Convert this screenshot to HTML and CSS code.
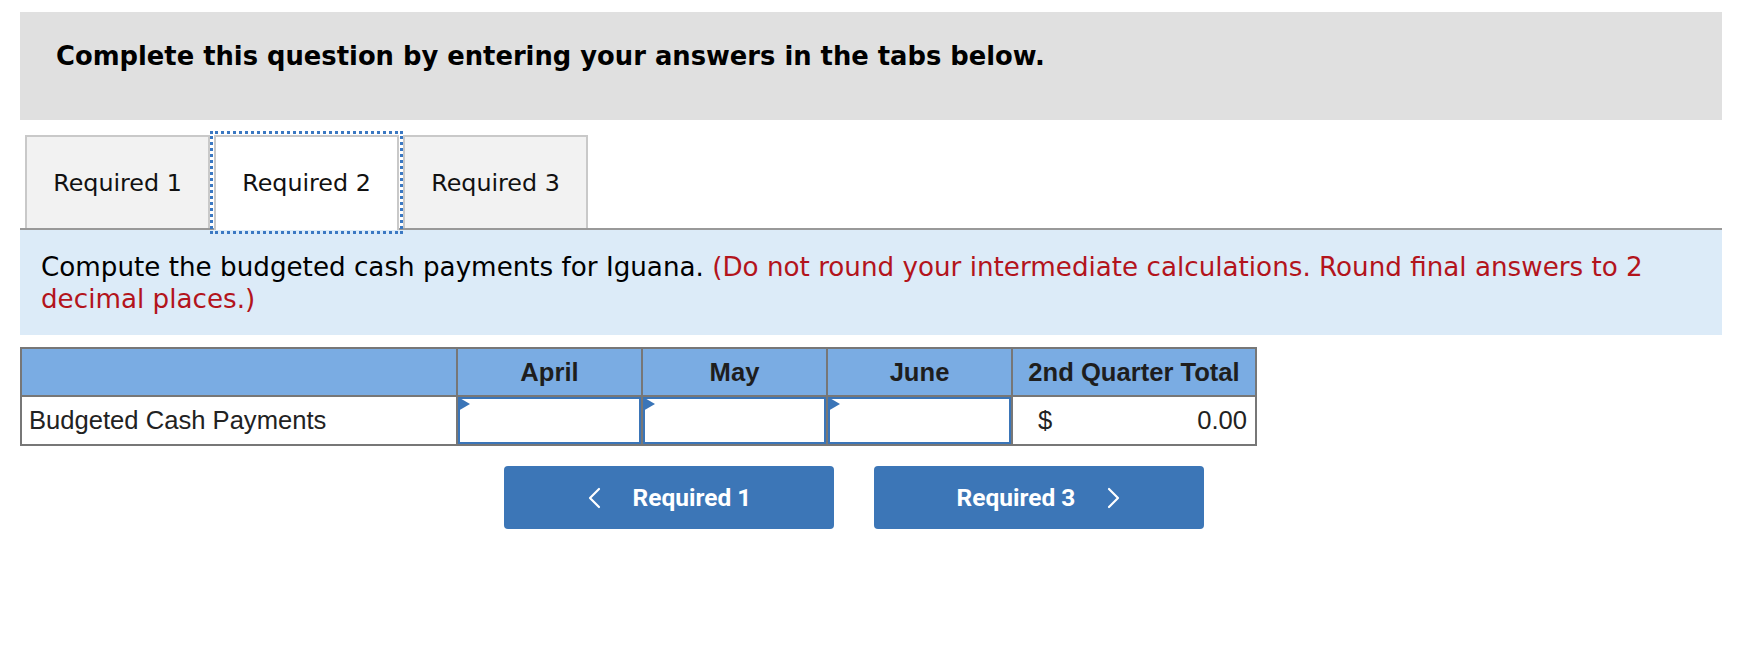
FILE: index.html
```html
<!DOCTYPE html>
<html>
<head>
<meta charset="utf-8">
<link rel="stylesheet" href="styles.css">
</head>
<body>
<div class="page">
  <div class="banner">Complete this question by entering your answers in the tabs below.</div>
  <div class="tabs">
    <div class="tab">Required 1</div>
    <div class="tab active">Required 2</div>
    <div class="tab">Required 3</div>
  </div>
  <div class="prompt">Compute the budgeted cash payments for Iguana. <span class="note">(Do not round your intermediate calculations. Round final answers to 2 decimal places.)</span></div>
  <table class="grid">
    <colgroup>
      <col class="c-label"><col class="c-month"><col class="c-month"><col class="c-month"><col class="c-total">
    </colgroup>
    <thead>
      <tr><th></th><th>April</th><th>May</th><th>June</th><th>2nd Quarter Total</th></tr>
    </thead>
    <tbody>
      <tr>
        <td class="label">Budgeted Cash Payments</td>
        <td class="entry"><div class="field"></div></td>
        <td class="entry"><div class="field"></div></td>
        <td class="entry"><div class="field"></div></td>
        <td class="total"><span class="cur">$</span><span class="amt">0.00</span></td>
      </tr>
    </tbody>
  </table>
  <div class="nav">
    <button class="navbtn"><svg class="chev" viewBox="0 0 14 22" width="14" height="22"><path d="M12 2 L3 11 L12 20" fill="none" stroke="#fff" stroke-width="2.2" stroke-linecap="round" stroke-linejoin="round"/></svg><span>Required 1</span></button>
    <button class="navbtn"><span>Required 3</span><svg class="chev" viewBox="0 0 14 22" width="14" height="22"><path d="M2 2 L11 11 L2 20" fill="none" stroke="#fff" stroke-width="2.2" stroke-linecap="round" stroke-linejoin="round"/></svg></button>
  </div>
</div>
</body>
</html>
```
FILE: styles.css
```css
html, body {
  margin: 0;
  padding: 0;
  background: #fff;
}
.page {
  padding: 12px 38px 0 20px;
  font-family: "DejaVu Sans", Verdana, sans-serif;
  color: #000;
}
.banner {
  background: #e0e0e0;
  height: 108px;
  box-sizing: border-box;
  padding: 29px 0 0 36px;
  font-weight: bold;
  font-size: 25.8px;
  line-height: 30px;
  color: #000;
}
.tabs {
  display: flex;
  align-items: flex-end;
  gap: 4px;
  margin-top: 15px;
  padding-left: 5px;
  border-bottom: 2px solid #999;
}
.tab {
  width: 185px;
  height: 93px;
  box-sizing: border-box;
  border: 2px solid #c9c9c9;
  border-bottom: 0;
  background: #f2f2f2;
  display: flex;
  align-items: center;
  justify-content: center;
  font-size: 23.8px;
  color: #111;
}
.tab.active {
  background: #fff;
  height: 95px;
  margin-bottom: -2px;
  position: relative;
  z-index: 1;
  outline: 3px dotted #3b78c2;
  outline-offset: 1px;
  padding-bottom: 2px;
}
.prompt {
  background: #dcebf8;
  padding: 21px 21px 20px 21px;
  font-size: 26.2px;
  line-height: 32px;
  color: #000;
}
.note {
  color: #b3141c;
}
.grid {
  margin-top: 12px;
  border-collapse: collapse;
  table-layout: fixed;
  width: 1235px;
  font-family: "Liberation Sans", Arial, sans-serif;
  font-size: 25.6px;
  color: #222;
}
.c-label { width: 436px; }
.c-month { width: 185px; }
.c-total { width: 244px; }
.grid th, .grid td {
  border: 2px solid #777;
  padding: 0;
}
.grid th {
  background: #7aace3;
  height: 46px;
  font-weight: bold;
  text-align: center;
  color: #1e1e1e;
}
.grid td {
  height: 47px;
  background: #fff;
}
.grid td.label {
  padding-left: 7px;
}
.field {
  position: relative;
  height: 47px;
  box-sizing: border-box;
  border: 2px solid #3a75b8;
}
.field::before {
  content: "";
  position: absolute;
  left: -2px;
  top: -2px;
  border-top: 7px solid transparent;
  border-bottom: 7px solid transparent;
  border-left: 12px solid #3a75b8;
}
.grid td.total {
  padding: 0 8px 0 25px;
}
.cur {
  float: left;
}
.amt {
  float: right;
}
.nav {
  display: flex;
  gap: 40px;
  margin-top: 20px;
  padding-left: 484px;
}
.navbtn {
  width: 330px;
  height: 63px;
  border: 0;
  border-radius: 4px;
  background: #3c76b7;
  color: #fff;
  font-family: Roboto, "Liberation Sans", sans-serif;
  font-weight: bold;
  font-size: 24.5px;
  display: flex;
  align-items: center;
  justify-content: center;
  gap: 32px;
  padding: 0;
  cursor: pointer;
}
.chev {
  display: block;
}
```
